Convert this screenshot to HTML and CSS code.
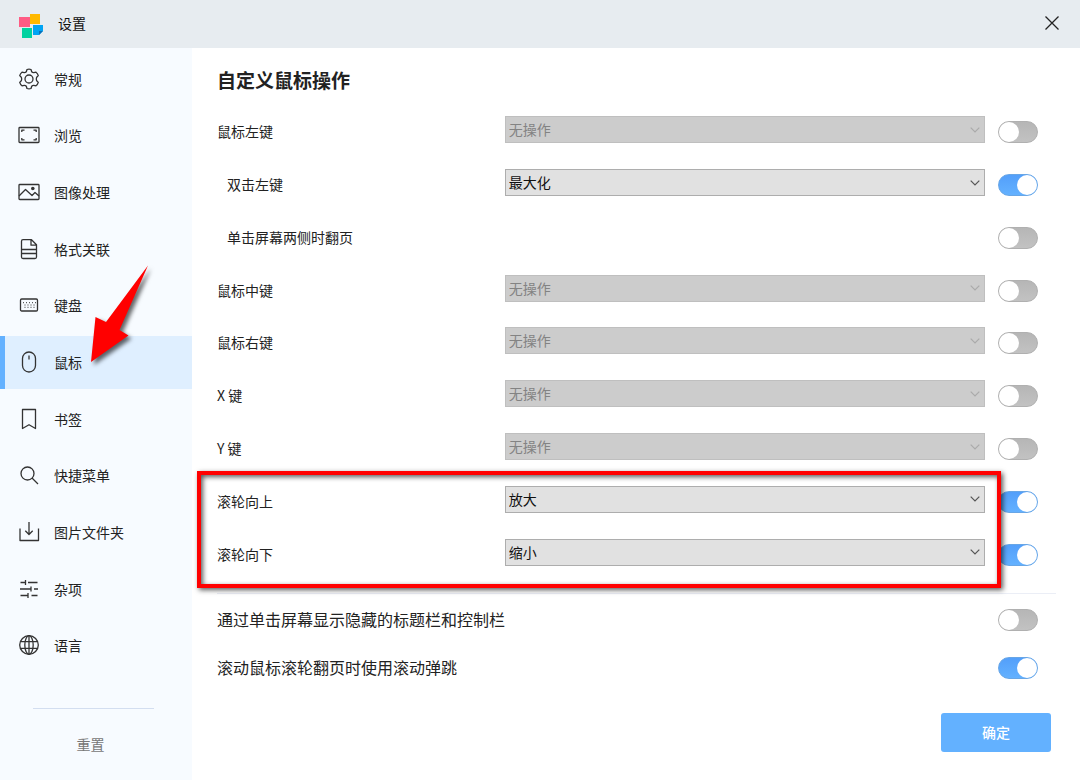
FILE: index.html
```
<!DOCTYPE html>
<html lang="zh-CN">
<head>
<meta charset="utf-8">
<meta name="viewport" content="width=device-width, initial-scale=1">
<title>设置</title>
<link rel="stylesheet" href="styles.css">
</head>
<body>
<header class="titlebar">
  <svg class="logo" viewBox="0 0 26 26" aria-hidden="true">
    <rect x="1" y="4" width="11" height="10" fill="#ff5c84"/>
    <rect x="12" y="1" width="10" height="10" fill="#ffb900"/>
    <rect x="4" y="15" width="10" height="10" fill="#00d2a0"/>
    <path d="M15 12h10v6l-4 4h-6z" fill="#00a4f4"/>
    <path d="M25 18l-4 4v-4z" fill="#0a70b8"/>
  </svg>
  <span class="title">设置</span>
  <button class="close" type="button" aria-label="关闭">
    <svg viewBox="0 0 16 16" aria-hidden="true"><path d="M1.5 1.5l13 13M14.5 1.5l-13 13"/></svg>
  </button>
</header>
<div class="layout">
  <aside class="sidebar">
    <nav class="nav">
      <a class="item" href="#general"><svg class="icon" viewBox="0 0 22 22" aria-hidden="true"><circle cx="11" cy="11" r="4"/><path d="M9 1.500Q11 .7 13 1.500L13.700 3.800Q14.600 4.800 15.800 4.700L18 4.200Q19.700 5.500 20.300 7.600L18.700 9.300Q18 11 18.700 12.700L20.300 14.400Q19.700 16.500 18 17.800L15.800 17.300Q14.600 17.200 13.700 18.200L13 20.500Q11 21.300 9 20.500L8.300 18.200Q7.400 17.200 6.200 17.300L4 17.800Q2.300 16.500 1.700 14.400L3.300 12.700Q4 11 3.300 9.300L1.700 7.600Q2.300 5.500 4 4.200L6.200 4.700Q7.400 4.800 8.300 3.800z"/></svg>常规</a>
      <a class="item" href="#browse"><svg class="icon" viewBox="0 0 22 22" aria-hidden="true"><rect x="1" y="3.500" width="20" height="15" rx=".8"/><path d="M3.800 8V6.200h2.700M15.500 6.200h2.700V8M3.800 14v1.800h2.700M15.500 15.800h2.700V14"/></svg>浏览</a>
      <a class="item" href="#image"><svg class="icon" viewBox="0 0 22 22" aria-hidden="true"><rect x="1" y="3.500" width="20" height="15" rx=".8"/><path d="M1 15l6.500-6.500 6.500 6 3-3 4 3.500"/><circle class="dot" cx="14.800" cy="7.500" r="1.800"/></svg>图像处理</a>
      <a class="item" href="#formats"><svg class="icon" viewBox="0 0 22 22" aria-hidden="true"><path d="M5 1.700h8.500l5 5V19a1.500 1.500 0 0 1-1.500 1.500H5A1.500 1.500 0 0 1 3.500 19V3.200A1.500 1.500 0 0 1 5 1.700zM13 1.700V7.200h5.500M3.500 11.500h15M3.500 15.500h15"/></svg>格式关联</a>
      <a class="item" href="#keyboard"><svg class="icon" viewBox="0 0 22 22" aria-hidden="true"><rect x="2.500" y="5" width="17" height="12" rx="1.200"/><path class="keys" stroke-dasharray="1 2" d="M5 8.700h13M6.500 11h11M6.500 13.300h10"/></svg>键盘</a>
      <a class="item active" href="#mouse" aria-current="page"><svg class="icon" viewBox="0 0 22 22" aria-hidden="true"><rect x="4.500" y="1" width="13" height="20" rx="6.500"/><path d="M11 4.500v4"/></svg>鼠标
        <svg class="arrow" viewBox="0 0 70 110" aria-hidden="true"><path d="M3 102L7.500 57l10.500 5L60 5.500 31.500 70 40.500 75.500z"/></svg>
      </a>
      <a class="item" href="#bookmarks"><svg class="icon" viewBox="0 0 22 22" aria-hidden="true"><path d="M4.500 1.500h13v19L11 16.700 4.500 20.500z"/></svg>书签</a>
      <a class="item" href="#shortcuts"><svg class="icon" viewBox="0 0 22 22" aria-hidden="true"><circle cx="9.500" cy="9.500" r="6.500"/><path d="M14 14l6 6"/></svg>快捷菜单</a>
      <a class="item" href="#folders"><svg class="icon" viewBox="0 0 22 22" aria-hidden="true"><path d="M2 7.500v12h18.500v-12M11 1v12M7.300 9.800L11 13.500l3.700-3.700"/></svg>图片文件夹</a>
      <a class="item" href="#misc"><svg class="icon" viewBox="0 0 22 22" aria-hidden="true"><path d="M2.500 4.500h5M10 4.500h9.500M7.500 2v5M2 11h11M16 11h4M13 8.500v5M2.500 17.500H10M13.500 17.500h6M10 15v5"/></svg>杂项</a>
      <a class="item" href="#language"><svg class="icon" viewBox="0 0 22 22" aria-hidden="true"><circle cx="11" cy="11" r="9.300"/><ellipse cx="11" cy="11" rx="4.200" ry="9.300"/><path d="M2.700 7.700h16.600M2.700 14.300h16.600M11 1.700v18.600"/></svg>语言</a>
    </nav>
    <div class="sidebar-foot">
      <button class="reset" type="button">重置</button>
    </div>
  </aside>
  <main class="main">
    <h1 class="heading">自定义鼠标操作</h1>
    <div class="group buttons">
      <div class="row"><label for="left">鼠标左键</label><select id="left" class="select" disabled><option>无操作</option></select><input class="toggle" type="checkbox" aria-label="启用鼠标左键"></div>
      <div class="row sub"><label for="double">双击左键</label><select id="double" class="select"><option>最大化</option></select><input class="toggle" type="checkbox" aria-label="启用双击左键" checked></div>
      <div class="row sub"><label class="wide" for="sides">单击屏幕两侧时翻页</label><input id="sides" class="toggle" type="checkbox"></div>
      <div class="row"><label for="middle">鼠标中键</label><select id="middle" class="select" disabled><option>无操作</option></select><input class="toggle" type="checkbox" aria-label="启用鼠标中键"></div>
      <div class="row"><label for="right">鼠标右键</label><select id="right" class="select" disabled><option>无操作</option></select><input class="toggle" type="checkbox" aria-label="启用鼠标右键"></div>
      <div class="row"><label for="xkey">X 键</label><select id="xkey" class="select" disabled><option>无操作</option></select><input class="toggle" type="checkbox" aria-label="启用 X 键"></div>
      <div class="row"><label for="ykey">Y 键</label><select id="ykey" class="select" disabled><option>无操作</option></select><input class="toggle" type="checkbox" aria-label="启用 Y 键"></div>
    </div>
    <div class="group wheel">
      <div class="row"><label for="up">滚轮向上</label><select id="up" class="select"><option>放大</option></select><input class="toggle" type="checkbox" aria-label="启用滚轮向上" checked></div>
      <div class="row"><label for="down">滚轮向下</label><select id="down" class="select"><option>缩小</option></select><input class="toggle" type="checkbox" aria-label="启用滚轮向下" checked></div>
      <div class="highlight"></div>
    </div>
    <div class="options">
      <div class="row"><label class="wide" for="bars">通过单击屏幕显示隐藏的标题栏和控制栏</label><input id="bars" class="toggle" type="checkbox"></div>
      <div class="row"><label class="wide" for="bounce">滚动鼠标滚轮翻页时使用滚动弹跳</label><input id="bounce" class="toggle" type="checkbox" checked></div>
    </div>
    <div class="actions"><button class="confirm" type="button">确定</button></div>
  </main>
</div>
</body>
</html>
```

FILE: styles.css
```
* { box-sizing: border-box; }

body {
  margin: 0;
  min-height: 100vh;
  display: flex;
  flex-direction: column;
  background: #fff;
  color: #222;
  font: 14px/20px "Noto Sans CJK SC", sans-serif;
}

button, select { font: inherit; }

.titlebar {
  display: flex;
  align-items: center;
  height: 48px;
  padding: 0 20px 2px 18px;
  background: #e7ecf0;
}
.logo { width: 26px; height: 26px; margin-top: 6px; }
.title { margin-left: 14px; color: #111; }
.close {
  display: flex;
  margin-left: auto;
  padding: 0;
  border: 0;
  background: none;
}
.close svg {
  width: 16px;
  height: 16px;
  fill: none;
  stroke: #222;
  stroke-width: 1.3;
}

.layout { flex: 1; display: flex; }

.sidebar {
  flex: 0 0 192px;
  display: flex;
  flex-direction: column;
  background: #f7fbff;
}
.nav {
  flex: 1;
  display: flex;
  flex-direction: column;
  justify-content: space-between;
  padding: 5px 0 0;
}
.item {
  position: relative;
  display: flex;
  align-items: center;
  gap: 14px;
  height: 53px;
  padding: 0 0 2px 18px;
  color: #222;
  text-decoration: none;
}
.item.active {
  padding-left: 13px;
  border-left: 5px solid #63b1ff;
  background: #dfefff;
}
.icon {
  width: 22px;
  height: 22px;
  fill: none;
  stroke: #333;
  stroke-width: 1.3;
  stroke-linejoin: round;
}
.icon .dot { fill: #333; stroke: none; }
.icon .keys { stroke-width: 1; }
.arrow {
  position: absolute;
  z-index: 1;
  left: 83px;
  top: -76px;
  width: 70px;
  height: 110px;
  fill: #f00;
  filter: drop-shadow(3px 3px 2px rgba(0, 0, 0, .6));
  pointer-events: none;
}
.sidebar-foot {
  margin: 35px 38px 0 33px;
  padding: 25px 6px 26px 0;
  border-top: 1px solid #d3def0;
  text-align: center;
}
.reset {
  padding: 0;
  border: 0;
  background: none;
  color: #777;
}

.main {
  flex: 1;
  display: flex;
  flex-direction: column;
  padding: 17px 24px 28px 25px;
}
.heading {
  margin: 0 0 11px;
  font-size: 19px;
  line-height: 30px;
}
.group { display: grid; grid-auto-rows: 1fr; }
.buttons { flex: 7; }
.wheel { flex: 2; position: relative; }
.row {
  display: grid;
  grid-template-columns: 7fr 12fr 40px;
  align-items: center;
  padding-right: 18px;
}
.row label { padding-bottom: 2px; }
.sub label { padding-left: 10px; }
.wide { grid-column: 1 / 3; }

.select {
  appearance: none;
  height: 27px;
  margin: 0 13px 5px 0;
  padding: 0 24px 1px 3px;
  border: 1px solid #adadad;
  border-radius: 0;
  background: #e1e1e1 url("data:image/svg+xml,%3Csvg xmlns='http://www.w3.org/2000/svg' width='10' height='6'%3E%3Cpath d='M.7.7L5 5 9.300.7' fill='none' stroke='%23555' stroke-width='1.200'/%3E%3C/svg%3E") no-repeat right 4px center;
  color: #111;
}
.select:disabled {
  border-color: #bfbfbf;
  background-color: #ccc;
  background-image: url("data:image/svg+xml,%3Csvg xmlns='http://www.w3.org/2000/svg' width='10' height='6'%3E%3Cpath d='M.7.7L5 5 9.300.7' fill='none' stroke='%23aaa' stroke-width='1.200'/%3E%3C/svg%3E");
  color: #838383;
  opacity: 1;
}

.toggle {
  appearance: none;
  display: flex;
  align-items: center;
  width: 40px;
  height: 22px;
  margin: 0;
  border: 1px solid #b0b0b0;
  border-radius: 11px;
  background: linear-gradient(#b6b6b6, #c2c2c2);
}
.toggle::before {
  content: "";
  width: 20px;
  height: 20px;
  border-radius: 50%;
  background: #fff;
}
.toggle:checked {
  justify-content: flex-end;
  border-color: #68a6e6;
  background: linear-gradient(#539ffa, #63b1ff);
}

.highlight {
  position: absolute;
  inset: -4px 55px -7px -20px;
  border: 4px solid #f00;
  box-shadow: 2px 2px 5px rgba(0, 0, 0, .65), inset 2px 2px 5px rgba(0, 0, 0, .65);
  pointer-events: none;
}

.options {
  margin-top: 12px;
  padding-top: 2px;
  border-top: 1px solid #ebeef6;
  font-size: 16px;
}
.options .row { height: 48px; }

.actions {
  display: flex;
  justify-content: flex-end;
  margin-top: 21px;
  padding-right: 5px;
}
.confirm {
  width: 110px;
  height: 39px;
  padding: 0 0 2px;
  border: 0;
  border-radius: 3px;
  background: #63b1ff;
  color: #fff;
  font-weight: 500;
}
```
